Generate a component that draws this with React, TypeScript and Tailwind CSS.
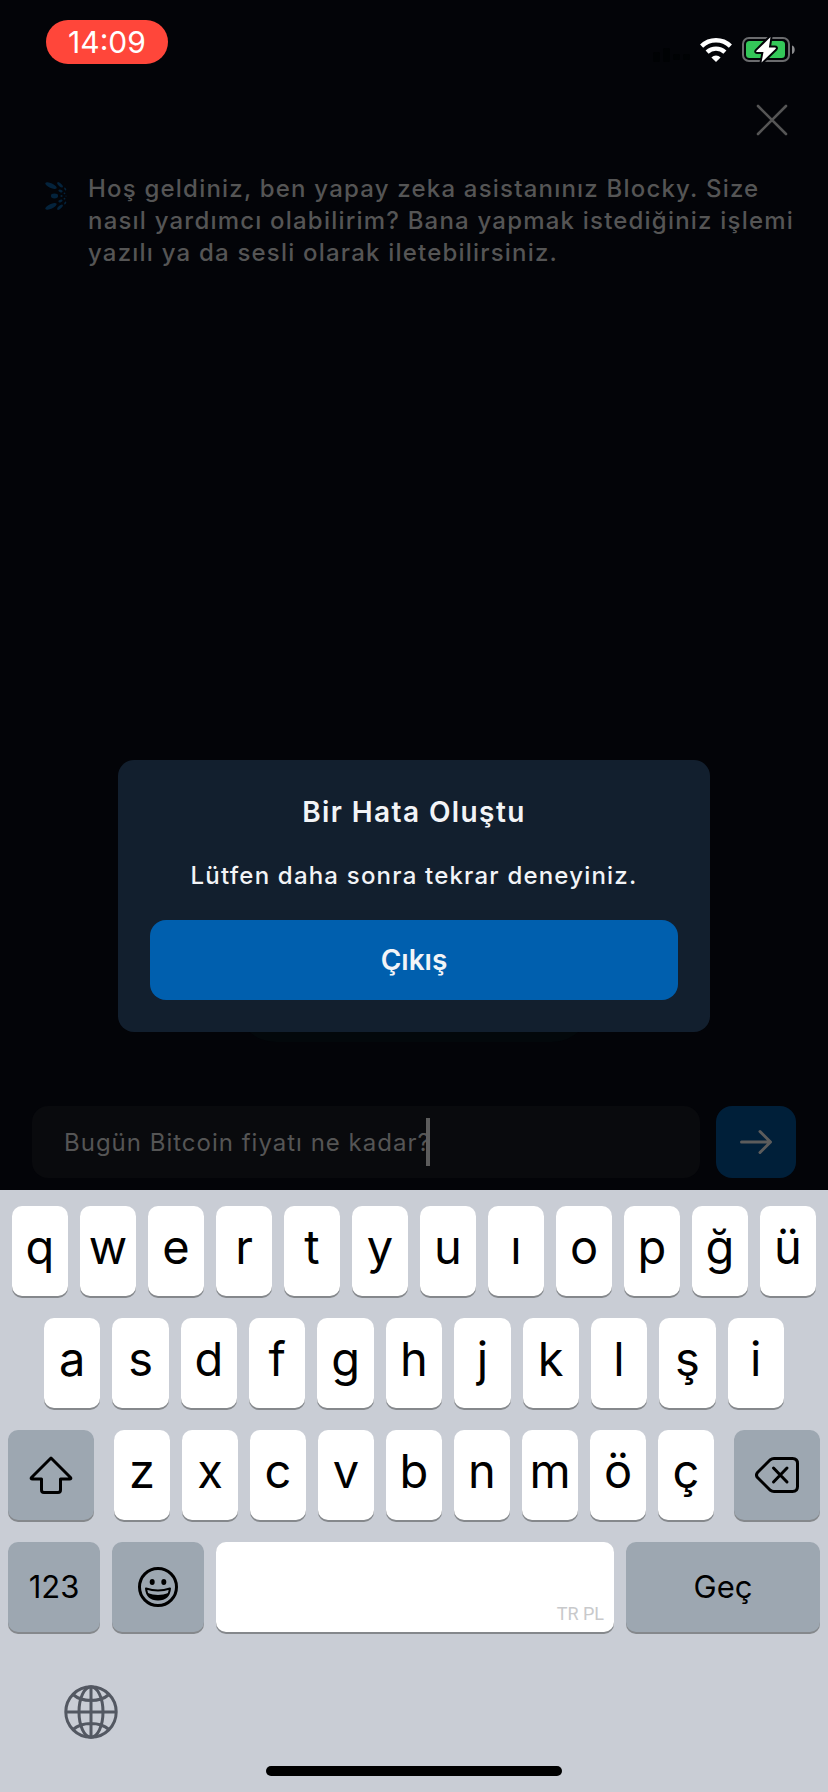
import type { ReactNode } from "react";

const ROWS = [
  ["q", "w", "e", "r", "t", "y", "u", "ı", "o", "p", "ğ", "ü"],
  ["a", "s", "d", "f", "g", "h", "j", "k", "l", "ş", "i"],
  ["z", "x", "c", "v", "b", "n", "m", "ö", "ç"],
];

function LetterKey({ letter }: { letter: string }) {
  return (
    <button
      type="button"
      className="h-[90px] min-w-0 flex-1 rounded-[10px] bg-white pb-2 text-center text-[47px] leading-[82px] text-black shadow-[0_2px_0_#85888c]"
    >
      {letter}
    </button>
  );
}

function GreyKey({ label, className, children }: { label: string; className: string; children: ReactNode }) {
  return (
    <button
      type="button"
      aria-label={label}
      className={`flex h-[90px] shrink-0 items-center justify-center rounded-[10px] bg-[#9da7b1] text-[31px] text-black shadow-[0_2px_0_#85888c] ${className}`}
    >
      {children}
    </button>
  );
}

function StatusBar() {
  return (
    <header className="flex items-start justify-between pt-5 pr-8 pl-[46px]">
      <div className="flex h-11 w-[122px] items-center justify-center rounded-full bg-[#ff463a] text-[30px] text-white">
        14:09
      </div>
      <div className="flex items-center gap-[10px] pt-4">
        <svg width="38" height="26" viewBox="0 0 38 26" fill="#000204" aria-hidden="true">
          <rect x="1" y="15" width="7" height="10" rx="1.500" />
          <rect x="11" y="11" width="7" height="14" rx="1.500" />
          <rect x="21" y="17" width="7" height="6" rx="1.500" />
          <rect x="31" y="17" width="7" height="6" rx="1.500" />
        </svg>
        <svg width="32" height="26" viewBox="0 0 32 26" aria-hidden="true">
          <g fill="none" stroke="#fff" strokeWidth="4.4">
            <path d="M1.6 9.1a20.6 20.6 0 0 1 28.8 0" />
            <path d="M7.1 15.2a12.9 12.9 0 0 1 17.8 0" />
          </g>
          <path d="M16 25l-4.6-4.6a6.6 6.6 0 0 1 9.2 0z" fill="#fff" />
        </svg>
        <svg width="54" height="28" viewBox="0 0 54 28" aria-hidden="true">
          <rect x="1" y="2" width="46" height="23" rx="6" fill="none" stroke="#6b6c6e" strokeWidth="2" />
          <rect x="4" y="5" width="39" height="17" rx="3.5" fill="#34c759" />
          <path d="M50 9.5c3.6 1 3.6 7.500 0 8.500z" fill="#8a8b8d" />
          <path
            d="M28.500 1L14.500 14.800q-.8 1.200.8 1.200h6.200L19.500 26.500 33.700 12.700q.8-1.200-.8-1.200h-6z"
            fill="#fff"
            stroke="#030408"
            strokeWidth="4"
            strokeLinejoin="round"
            paintOrder="stroke"
          />
        </svg>
      </div>
    </header>
  );
}

function AssistantMark() {
  return (
    <svg width="22" height="28" viewBox="0 0 22 28" fill="#04233c" aria-hidden="true">
      <ellipse cx="6" cy="3.700" rx="6.200" ry="2.300" transform="rotate(25 6 3.700)" />
      <ellipse cx="6" cy="24.300" rx="6.200" ry="2.300" transform="rotate(-25 6 24.300)" />
      <ellipse cx="9.500" cy="14" rx="3.600" ry="2.400" />
      <ellipse cx="15" cy="2.800" rx="3.600" ry="1.500" transform="rotate(42 15 2.800)" />
      <ellipse cx="15" cy="25.200" rx="3.600" ry="1.500" transform="rotate(-42 15 25.200)" />
      <ellipse cx="15.500" cy="9" rx="2.200" ry="1.200" transform="rotate(20 15.500 9)" />
      <ellipse cx="15.500" cy="19" rx="2.200" ry="1.200" transform="rotate(-20 15.500 19)" />
      <circle cx="16.500" cy="14" r="1.100" />
      <ellipse cx="20.200" cy="7" rx="1.600" ry=".8" transform="rotate(60 20.200 7)" />
      <ellipse cx="20.200" cy="21" rx="1.600" ry=".8" transform="rotate(-60 20.200 21)" />
      <circle cx="19.500" cy="11.300" r=".9" />
      <circle cx="19.500" cy="16.700" r=".9" />
      <circle cx="21" cy="14" r=".6" />
    </svg>
  );
}

function ErrorDialog() {
  return (
    <div
      role="alertdialog"
      aria-labelledby="error-title"
      aria-describedby="error-text"
      className="relative mx-[118px] flex flex-col rounded-2xl bg-[#121f2e] p-8 text-center text-[#f2f4f7]"
    >
      <h1 id="error-title" className="text-[28px] leading-10 font-semibold tracking-wider">
        Bir Hata Oluştu
      </h1>
      <p id="error-text" className="mt-6 text-2xl leading-10 font-medium tracking-wider">
        Lütfen daha sonra tekrar deneyiniz.
      </p>
      <button type="button" className="mt-6 h-20 rounded-2xl bg-[#005fae] text-[28px] font-semibold">
        Çıkış
      </button>
    </div>
  );
}

function Keyboard() {
  return (
    <section aria-label="Klavye" className="flex flex-col bg-[#c9cdd5] px-2 pt-4 pb-4">
      <div className="flex flex-col gap-[22px]">
        <div className="flex gap-3 px-1">
          {ROWS[0].map((k) => (
            <LetterKey key={k} letter={k} />
          ))}
        </div>
        <div className="flex gap-3 px-9">
          {ROWS[1].map((k) => (
            <LetterKey key={k} letter={k} />
          ))}
        </div>
        <div className="flex gap-5">
          <GreyKey label="Shift" className="w-[86px]">
            <svg width="44" height="38" viewBox="0 0 44 38" fill="none" stroke="#000" strokeWidth="3" strokeLinejoin="round" aria-hidden="true">
              <path d="M22 2L2.500 21.500q-1 1.500 1 1.500H12.500V34q0 2.500 2.500 2.500H29q2.500 0 2.500-2.500V23H40.500q2 0 1-1.500z" />
            </svg>
          </GreyKey>
          <div className="flex min-w-0 flex-1 gap-3">
            {ROWS[2].map((k) => (
              <LetterKey key={k} letter={k} />
            ))}
          </div>
          <GreyKey label="Sil" className="w-[86px]">
            <svg width="44" height="36" viewBox="0 0 44 36" fill="none" stroke="#000" strokeWidth="3" strokeLinejoin="round" strokeLinecap="round" aria-hidden="true">
              <path d="M15 3Q17 1.500 19 1.500H37.500q5 0 5 5V29.500q0 5-5 5H19q-2 0-4-1.500L2.500 20.500q-2-2.500 0-5z" />
              <path d="M18.500 11L32 25M32 11L18.500 25" />
            </svg>
          </GreyKey>
        </div>
        <div className="flex gap-3">
          <GreyKey label="123" className="w-[92px]">
            123
          </GreyKey>
          <GreyKey label="Emoji" className="w-[92px]">
            <svg width="42" height="42" viewBox="0 0 42 42" fill="none" stroke="#000" strokeWidth="3" aria-hidden="true">
              <circle cx="21" cy="21" r="18.500" />
              <ellipse cx="15.200" cy="16" rx="2.500" ry="3" fill="#000" stroke="none" />
              <ellipse cx="26.800" cy="16" rx="2.500" ry="3" fill="#000" stroke="none" />
              <path d="M9 22.500Q21 26.500 33 22.500 32 33.500 21 33.500T9 22.500z" strokeWidth="2" strokeLinejoin="round" />
              <path d="M10.500 27Q21 31 31.500 27 28.500 33.500 21 33.500T10.500 27z" fill="#000" stroke="none" />
            </svg>
          </GreyKey>
          <button
            type="button"
            aria-label="TR PL"
            className="flex h-[90px] min-w-0 flex-1 items-end justify-end rounded-[10px] bg-white px-[10px] pb-1 font-['Roboto','Liberation_Sans',sans-serif] text-lg text-[#c8c9cb] shadow-[0_2px_0_#85888c]"
          >
            TR PL
          </button>
          <GreyKey label="Geç" className="w-[194px]">
            Geç
          </GreyKey>
        </div>
      </div>
      <button type="button" aria-label="Klavye dili" className="mt-[53px] ml-14 w-[54px]">
        <svg width="54" height="54" viewBox="0 0 54 54" fill="none" stroke="#535862" strokeWidth="3" aria-hidden="true">
          <circle cx="27" cy="27" r="25.200" />
          <ellipse cx="27" cy="27" rx="12" ry="25.200" />
          <path d="M27 2V52M2 27H52M9 9.500Q16 15.500 27 15.500T45 9.500M9 44.500Q16 38.500 27 38.500T45 44.500" />
        </svg>
      </button>
      <div className="mt-[27px] h-[10px] w-[296px] self-center rounded-full bg-black" />
    </section>
  );
}

export default function App() {
  return (
    <main className="flex min-h-screen flex-col bg-[#030408] font-['Inter','Liberation_Sans',sans-serif]">
      <StatusBar />
      <div className="flex justify-end pt-10 pr-10">
        <button type="button" aria-label="Kapat" className="size-8">
          <svg width="32" height="32" viewBox="0 0 32 32" stroke="#555" strokeWidth="2.600" strokeLinecap="round" aria-hidden="true">
            <path d="M2 2L30 30M30 2L2 30" />
          </svg>
        </button>
      </div>
      <div className="mt-[37px] flex gap-[21px] pr-8 pl-[45px] text-[#555]">
        <div className="pt-[9px]">
          <AssistantMark />
        </div>
        <p className="text-2xl leading-8 font-medium tracking-wider">
          Hoş geldiniz, ben yapay zeka asistanınız Blocky. Size nasıl yardımcı olabilirim? Bana yapmak istediğiniz işlemi
          yazılı ya da sesli olarak iletebilirsiniz.
        </p>
      </div>
      <div className="flex flex-1 flex-col justify-end pb-16">
        <div className="relative pb-[10px]">
          <div className="absolute inset-x-[236px] bottom-0 h-20 rounded-[40px] bg-[#03080b]" />
          <ErrorDialog />
        </div>
      </div>
      <form className="flex gap-4 px-8 pb-3" onSubmit={(e) => e.preventDefault()}>
        <label className="relative flex min-w-0 flex-1">
          <input
            type="text"
            aria-label="Mesaj"
            defaultValue="Bugün Bitcoin fiyatı ne kadar?"
            className="h-[72px] w-full rounded-2xl bg-[#090a0d] px-8 text-2xl tracking-[1px] text-[#555] outline-none"
          />
          <span className="absolute top-3 left-[394px] h-12 w-1 bg-[#5c5c5c]" />
        </label>
        <button type="submit" aria-label="Gönder" className="flex h-[72px] w-20 items-center justify-center rounded-2xl bg-[#001f39]">
          <svg width="34" height="26" viewBox="0 0 34 26" fill="none" stroke="#5c5c5c" strokeWidth="3" strokeLinecap="round" strokeLinejoin="round" aria-hidden="true">
            <path d="M2.500 13H31M21 2.500L31.500 13 21 23.500" />
          </svg>
        </button>
      </form>
      <Keyboard />
    </main>
  );
}
